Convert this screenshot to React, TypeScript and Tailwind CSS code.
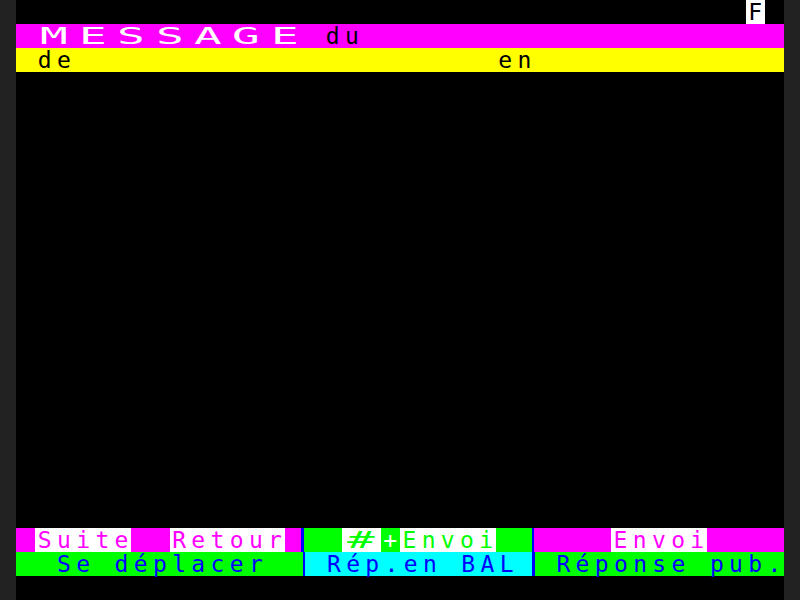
import React from "react";

const Cells = ({ t, c }: { t: string; c: string }) => (
  <>
    {[...t].map((ch, i) => (
      <span key={i} className={`inline-block w-[19.2px] shrink-0 text-center ${c}`}>
        {ch === " " ? "\u00a0" : ch}
      </span>
    ))}
  </>
);

const Wide = ({ t, c }: { t: string; c: string }) => (
  <>
    {[...t].map((ch, i) => (
      <span key={i} className={`inline-flex w-[38.4px] shrink-0 justify-center ${c}`}>
        <span className="inline-block scale-x-200">{ch === " " ? "\u00a0" : ch}</span>
      </span>
    ))}
  </>
);

export default function App() {
  return (
    <div className="w-[800px] h-[600px] bg-[#222222] flex font-['DejaVu_Sans_Mono',monospace] text-[23px] leading-6 overflow-hidden">
      <div className="w-[768px] mx-4 h-full bg-black flex flex-col">
        {/* row 0 */}
        <div className="h-6 flex justify-end pr-[19.2px]">
          <Cells t="F" c="bg-white text-black" />
        </div>
        {/* row 1 */}
        <div className="h-6 flex bg-[#ff00ff]">
          <Cells t=" " c="" />
          <Wide t="MESSAGE" c="text-white" />
          <Cells t=" du" c="text-black" />
        </div>
        {/* row 2 */}
        <div className="h-6 flex bg-[#ffff00]">
          <Cells t=" de                      en" c="text-black" />
        </div>
        <div className="flex-1" />
        {/* row 22 */}
        <div className="h-6 flex">
          <div className="w-[19.2px] bg-[#ff00ff]" />
          <Cells t="Suite" c="bg-white text-[#ff00ff]" />
          <div className="w-[38.4px] bg-[#ff00ff]" />
          <Cells t="Retour" c="bg-white text-[#ff00ff]" />
          <div className="w-[16.8px] bg-[#ff00ff]" />
          <div className="w-[2.4px] bg-[#0000ff]" />
          <div className="w-[38.4px] bg-[#00ff00]" />
          <Wide t="#" c="bg-white text-[#00ff00]" />
          <Cells t="+" c="bg-[#00ff00] text-white" />
          <Cells t="Envoi" c="bg-white text-[#00ff00]" />
          <div className="w-[36px] bg-[#00ff00]" />
          <div className="w-[2.4px] bg-[#0000ff]" />
          <div className="w-[76.8px] bg-[#ff00ff]" />
          <Cells t="Envoi" c="bg-white text-[#ff00ff]" />
          <div className="flex-1 bg-[#ff00ff]" />
        </div>
        {/* row 23 */}
        <div className="h-6 flex text-[#0000ff]">
          <div className="w-[288px] flex bg-[#00ff00]">
            <Cells t="  Se déplacer" c="" />
          </div>
          <div className="w-[2.4px] bg-[#0000ff]" />
          <div className="w-[228px] flex bg-[#00ffff]">
            <Cells t=" Rép.en BAL" c="" />
          </div>
          <div className="w-[2.4px] bg-[#0000ff]" />
          <div className="flex-1 flex bg-[#00ff00]">
            <Cells t=" Réponse pub." c="" />
          </div>
        </div>
        {/* row 24 */}
        <div className="h-6" />
      </div>
    </div>
  );
}
